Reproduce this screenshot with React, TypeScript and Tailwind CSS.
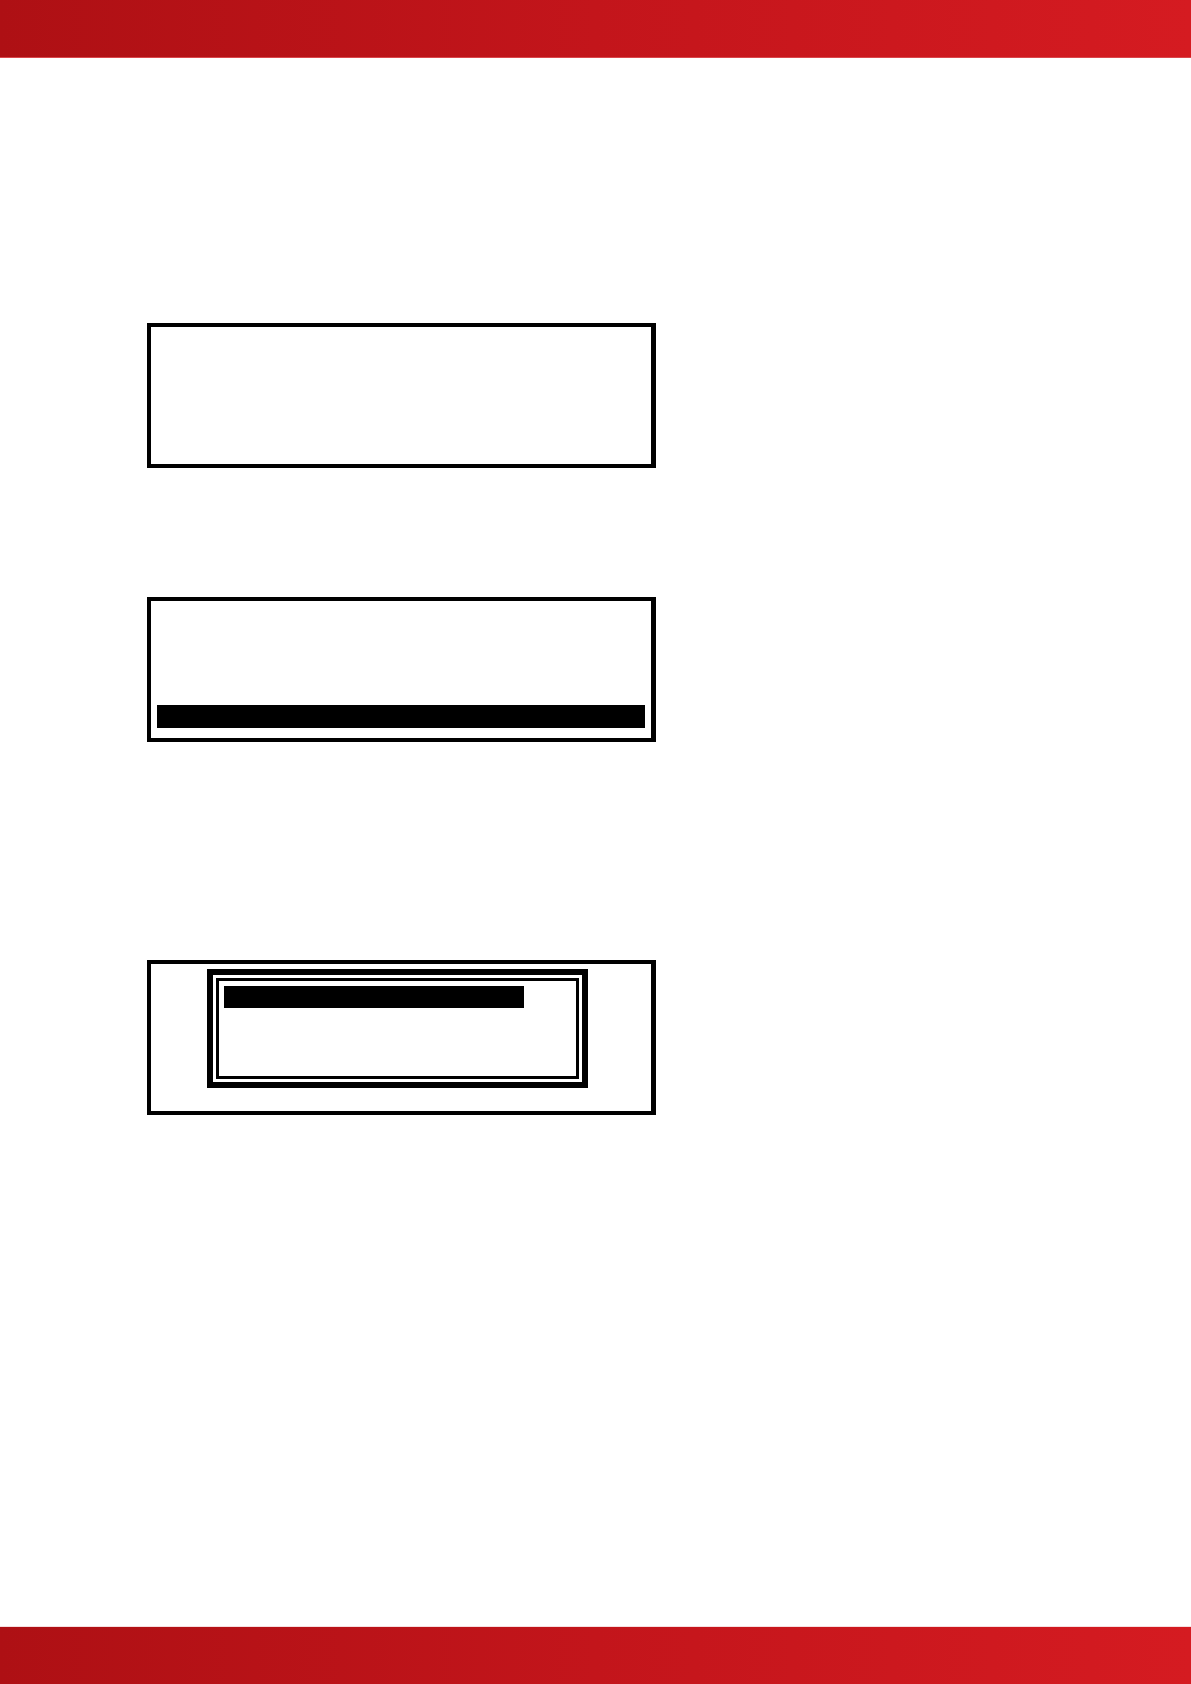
import type { ReactNode } from "react";
import clsx from "clsx";

type DisplayProps = {
  label: string;
  className?: string;
  children?: ReactNode;
};

// LCD display outline, slightly heavier on the right edge
function Display({ label, className, children }: DisplayProps) {
  return (
    <section
      aria-label={label}
      className={clsx("w-full max-w-[509px] border-4 border-r-[5px] border-black", className)}
    >
      {children}
    </section>
  );
}

export default function App() {
  return (
    <div className="flex min-h-screen flex-col bg-white">
      {/* Header */}
      <header className="h-[58px] shrink-0 border-b border-[#d9474c] bg-linear-to-r from-[#ae1014] via-[#c3151b] to-[#d51b21]" />

      <main className="flex grow flex-col pt-[265px] pr-6 pl-[147px]">
        <Display label="Display" className="h-[145px]" />

        {/* Last line highlighted */}
        <Display label="Display menu" className="mt-[129px] flex h-[145px] items-end px-1.5 pb-2.5">
          <div className="h-[23px] grow bg-black" />
        </Display>

        {/* Pop-up with the first option highlighted */}
        <Display label="Display options" className="mt-[218px] pt-[5px] pr-[63px] pb-[23px] pl-14">
          <div className="border-6 border-black p-[3px]">
            <div className="h-[101px] border-3 border-black p-[5px]">
              <div className="h-[22px] w-full max-w-[300px] bg-black" />
            </div>
          </div>
        </Display>
      </main>

      {/* Footer */}
      <footer className="h-[58px] shrink-0 border-t border-[#f6dfe0] bg-linear-to-r from-[#ae1014] via-[#c3151b] to-[#d51b21]" />
    </div>
  );
}
